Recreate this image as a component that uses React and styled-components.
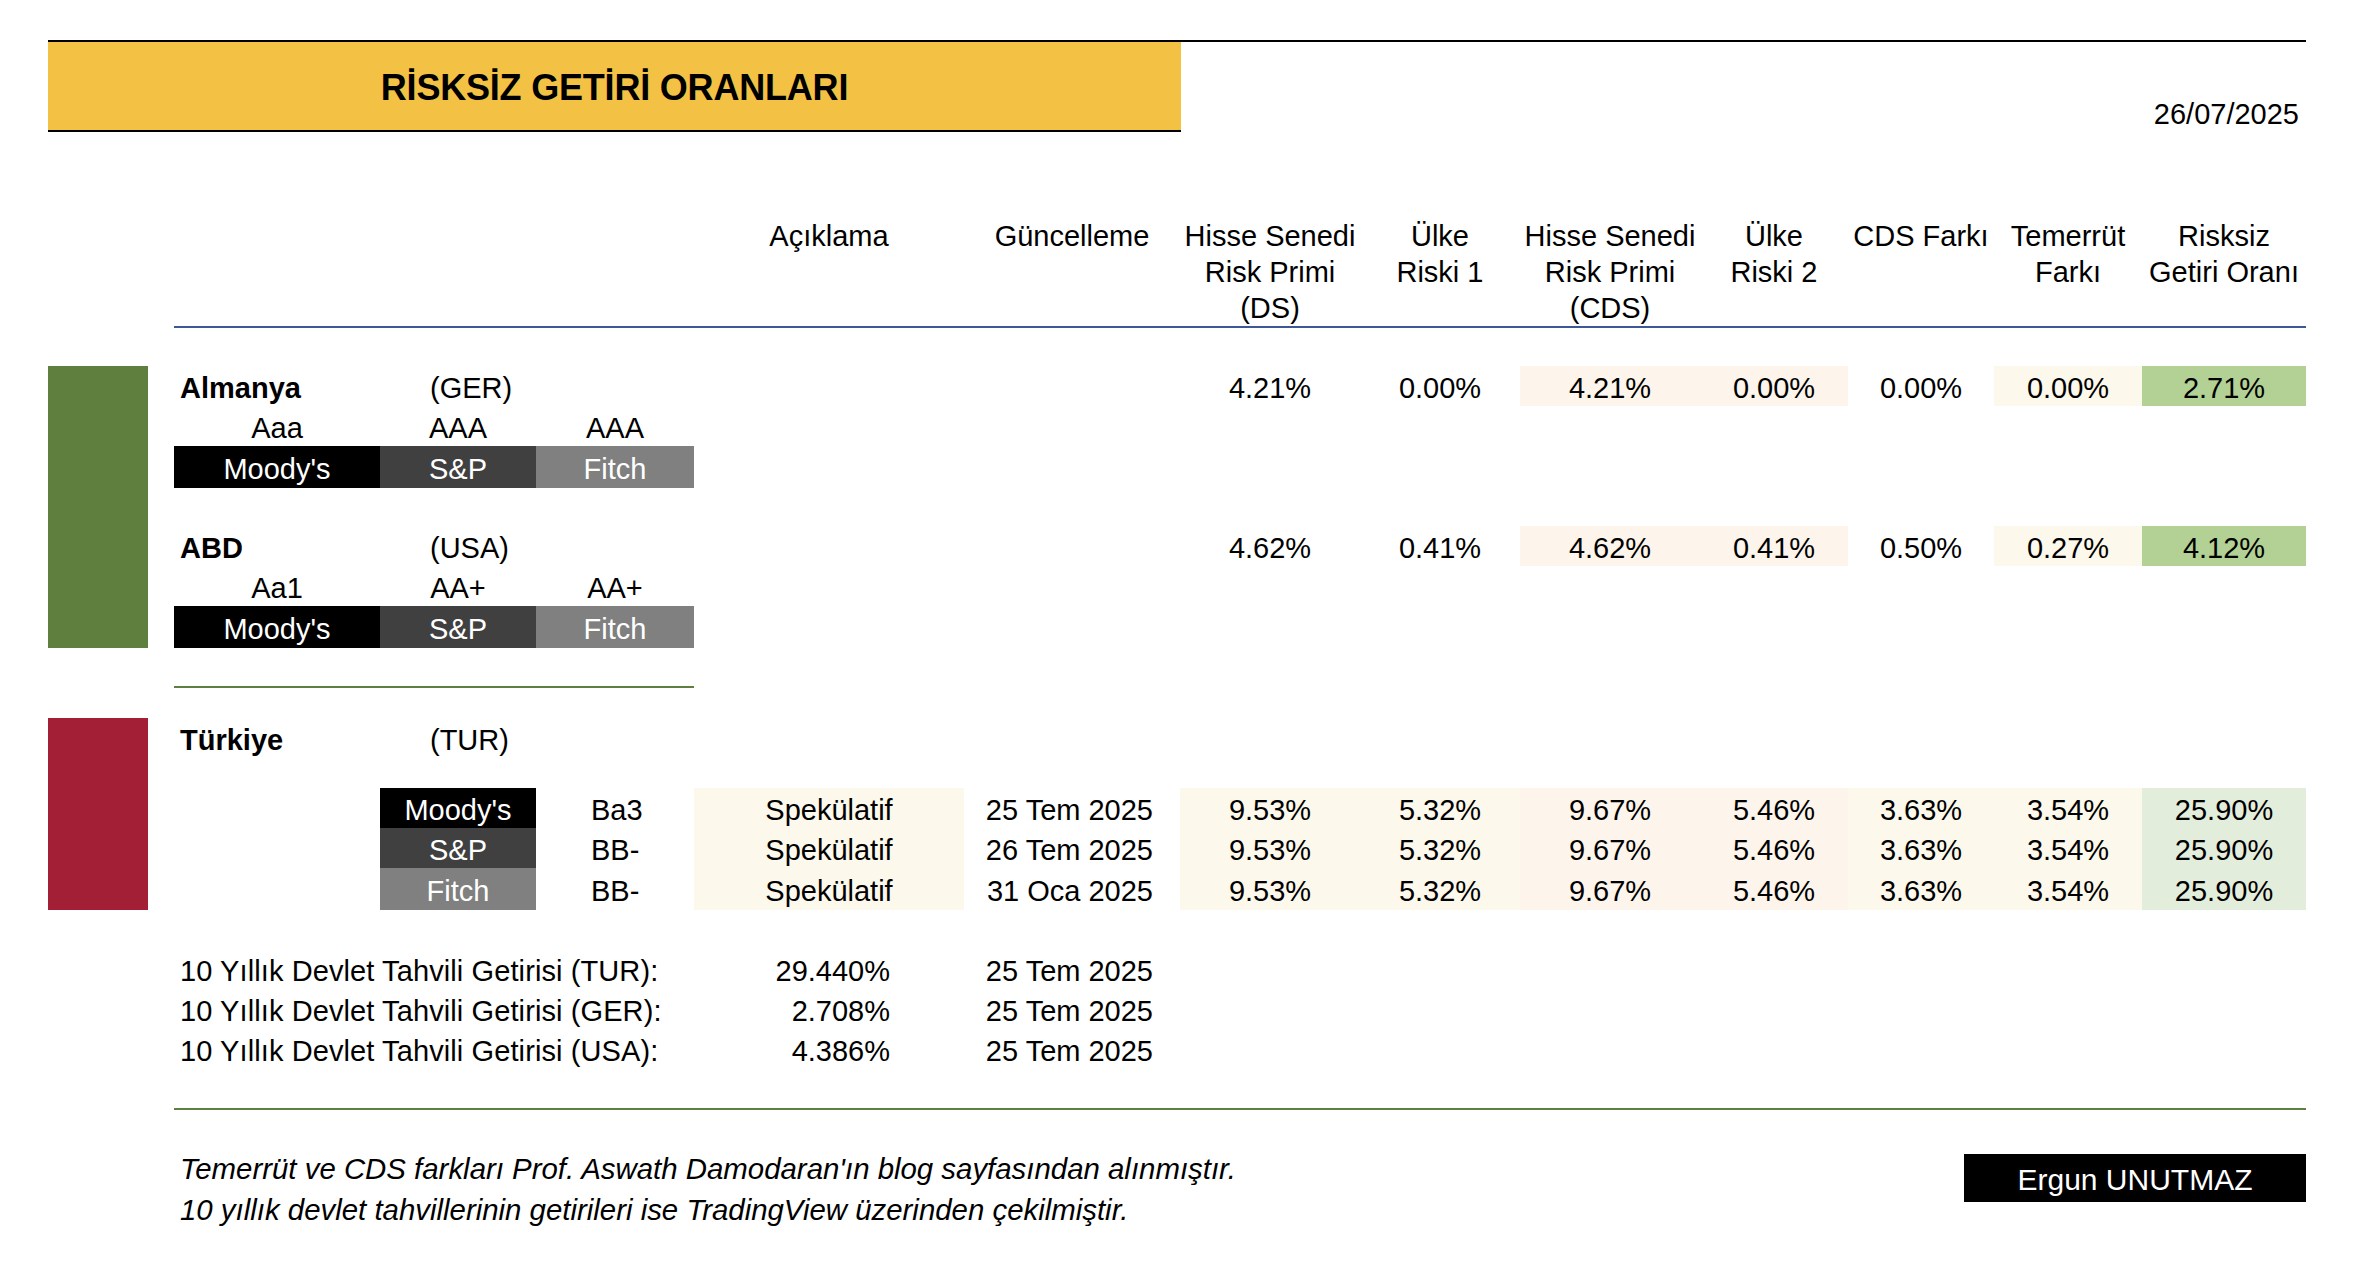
import React from "react";
import styled, { createGlobalStyle } from "styled-components";

const GlobalStyle = createGlobalStyle`
  html, body { margin: 0; padding: 0; background: #ffffff; }
  body {
    font-family: "Liberation Sans", Arial, Helvetica, sans-serif;
    color: #000000;
  }
`;

const COLS =
  "100px 26px 206px 156px 158px 270px 216px 180px 160px 180px 148px 146px 148px 164px";
const ROWS =
  "110px 2px 38px 40px 40px 42px 38px 40px 40px 42px 38px 2px 30px 40px 30px 40px 40px 42px 39px 40px 40px 40px 39px 2px";

const Page = styled.div`
  width: 2370px;
  height: 1264px;
  box-sizing: border-box;
  padding: 40px 64px 0 48px;
  overflow: hidden;
`;

const TitleRow = styled.div`
  display: flex;
  justify-content: space-between;
  border-top: 2px solid #000;
  height: 92px;
`;

const TitleBox = styled.div`
  width: 1133px;
  height: 90px;
  box-sizing: border-box;
  padding-top: 3px;
  background: #f3c244;
  border-bottom: 2px solid #000;
  display: flex;
  align-items: center;
  justify-content: center;
  font-size: 36px;
  font-weight: 700;
  letter-spacing: -0.2px;
`;

const DateText = styled.div`
  align-self: flex-end;
  font-size: 29px;
  line-height: 36px;
  padding-right: 7px;
  margin-bottom: 2px;
`;

const Sheet = styled.div`
  display: grid;
  grid-template-columns: ${COLS};
  grid-template-rows: ${ROWS};
  margin-top: 82px;
  font-size: 29px;
`;

const place = (p) => `
  grid-column: ${p.$col} / span ${p.$span || 1};
  grid-row: ${p.$row} / span ${p.$rspan || 1};
`;

const cellBase = `
  display: flex;
  align-items: center;
  box-sizing: border-box;
  padding-top: 4px;
  white-space: nowrap;
`;

const HeaderCell = styled.div`
  ${place}
  text-align: center;
  line-height: 36px;
  padding-top: 2px;
  white-space: nowrap;
`;

const Rule = styled.div`
  ${place}
  background: ${(p) => p.$color};
`;

const SideBar = styled.div`
  ${place}
  background: ${(p) => p.$color};
`;

const CountryName = styled.div`
  ${place}
  ${cellBase}
  padding-left: 6px;
  font-weight: 700;
`;

const CountryCode = styled.div`
  ${place}
  ${cellBase}
  padding-left: 50px;
`;

const RatingCell = styled.div`
  ${place}
  ${cellBase}
  justify-content: ${(p) => (p.$left ? "flex-start" : "center")};
  padding-left: ${(p) => (p.$left ? "55px" : "0")};
`;

const AGENCY = { moodys: "#000000", sp: "#404040", fitch: "#808080" };

const AgencyTag = styled.div`
  ${place}
  ${cellBase}
  justify-content: center;
  background: ${(p) => AGENCY[p.$kind]};
  color: #ffffff;
`;

const TONES = {
  none: "transparent",
  cream: "#fcf8ec",
  peach: "#fdf5ec",
  green: "#b3d095",
  mint: "#e3eddb",
};

const ValueCell = styled.div`
  ${place}
  ${cellBase}
  justify-content: center;
  background: ${(p) => TONES[p.$tone || "none"]};
`;

const DateCell = styled.div`
  ${place}
  ${cellBase}
  justify-content: flex-end;
  padding-right: 27px;
`;

const BondLabel = styled.div`
  ${place}
  ${cellBase}
  padding-left: 6px;
  letter-spacing: 0.1px;
`;

const BondValue = styled.div`
  ${place}
  ${cellBase}
  justify-content: flex-end;
  padding-right: 74px;
`;

const Footer = styled.div`
  display: flex;
  justify-content: space-between;
  align-items: flex-start;
  margin-top: 38px;
  padding-left: 132px;
`;

const Notes = styled.div`
  font-size: 29.4px;
  line-height: 41px;
  font-style: italic;
`;

const Signature = styled.div`
  width: 342px;
  height: 48px;
  margin-top: 6px;
  box-sizing: border-box;
  padding-top: 3px;
  background: #000;
  color: #fff;
  font-size: 30px;
  display: flex;
  align-items: center;
  justify-content: center;
`;

const headers = [
  ["Açıklama"],
  ["Güncelleme"],
  ["Hisse Senedi", "Risk Primi", "(DS)"],
  ["Ülke", "Riski 1"],
  ["Hisse Senedi", "Risk Primi", "(CDS)"],
  ["Ülke", "Riski 2"],
  ["CDS Farkı"],
  ["Temerrüt", "Farkı"],
  ["Risksiz", "Getiri Oranı"],
];

const topCountries = [
  {
    name: "Almanya",
    code: "(GER)",
    row: 4,
    ratings: ["Aaa", "AAA", "AAA"],
    values: ["4.21%", "0.00%", "4.21%", "0.00%", "0.00%", "0.00%", "2.71%"],
  },
  {
    name: "ABD",
    code: "(USA)",
    row: 8,
    ratings: ["Aa1", "AA+", "AA+"],
    values: ["4.62%", "0.41%", "4.62%", "0.41%", "0.50%", "0.27%", "4.12%"],
  },
];

const topTones = ["none", "none", "peach", "peach", "none", "cream", "green"];
const turTones = ["cream", "cream", "peach", "peach", "cream", "cream", "mint"];

const agencies = [
  { kind: "moodys", label: "Moody's" },
  { kind: "sp", label: "S&P" },
  { kind: "fitch", label: "Fitch" },
];

const turRows = [
  { kind: "moodys", label: "Moody's", rating: "Ba3", date: "25 Tem 2025" },
  { kind: "sp", label: "S&P", rating: "BB-", date: "26 Tem 2025" },
  { kind: "fitch", label: "Fitch", rating: "BB-", date: "31 Oca 2025" },
];
const turValues = ["9.53%", "5.32%", "9.67%", "5.46%", "3.63%", "3.54%", "25.90%"];

const bonds = [
  ["10 Yıllık Devlet Tahvili Getirisi (TUR):", "29.440%", "25 Tem 2025"],
  ["10 Yıllık Devlet Tahvili Getirisi (GER):", "2.708%", "25 Tem 2025"],
  ["10 Yıllık Devlet Tahvili Getirisi (USA):", "4.386%", "25 Tem 2025"],
];

export default function App() {
  return (
    <>
      <GlobalStyle />
      <Page>
        <TitleRow>
          <TitleBox>RİSKSİZ GETİRİ ORANLARI</TitleBox>
          <DateText>26/07/2025</DateText>
        </TitleRow>

        <Sheet>
          {headers.map((lines, i) => (
            <HeaderCell key={i} $col={6 + i} $row={1}>
              {lines.map((l, j) => (
                <div key={j}>{l}</div>
              ))}
            </HeaderCell>
          ))}
          <Rule $col={3} $span={12} $row={2} $color="#3e5795" />

          <SideBar $col={1} $row={4} $rspan={7} $color="#5f7f3e" />
          {topCountries.map((c) => (
            <React.Fragment key={c.name}>
              <CountryName $col={3} $row={c.row}>{c.name}</CountryName>
              <CountryCode $col={4} $span={2} $row={c.row}>{c.code}</CountryCode>
              {c.ratings.map((r, i) => (
                <RatingCell key={i} $col={3 + i} $row={c.row + 1}>{r}</RatingCell>
              ))}
              {agencies.map((a, i) => (
                <AgencyTag key={a.kind} $kind={a.kind} $col={3 + i} $row={c.row + 2}>
                  {a.label}
                </AgencyTag>
              ))}
              {c.values.map((v, i) => (
                <ValueCell key={i} $col={8 + i} $row={c.row} $tone={topTones[i]}>
                  {v}
                </ValueCell>
              ))}
            </React.Fragment>
          ))}
          <Rule $col={3} $span={3} $row={12} $color="#5f7f3e" />

          <SideBar $col={1} $row={14} $rspan={5} $color="#a21f36" />
          <CountryName $col={3} $row={14}>Türkiye</CountryName>
          <CountryCode $col={4} $span={2} $row={14}>(TUR)</CountryCode>
          {turRows.map((t, k) => (
            <React.Fragment key={t.kind}>
              <AgencyTag $kind={t.kind} $col={4} $row={16 + k}>{t.label}</AgencyTag>
              <RatingCell $left $col={5} $row={16 + k}>{t.rating}</RatingCell>
              <ValueCell $col={6} $row={16 + k} $tone="cream">Spekülatif</ValueCell>
              <DateCell $col={7} $row={16 + k}>{t.date}</DateCell>
              {turValues.map((v, i) => (
                <ValueCell key={i} $col={8 + i} $row={16 + k} $tone={turTones[i]}>
                  {v}
                </ValueCell>
              ))}
            </React.Fragment>
          ))}

          {bonds.map((b, k) => (
            <React.Fragment key={k}>
              <BondLabel $col={3} $span={3} $row={20 + k}>{b[0]}</BondLabel>
              <BondValue $col={6} $row={20 + k}>{b[1]}</BondValue>
              <DateCell $col={7} $row={20 + k}>{b[2]}</DateCell>
            </React.Fragment>
          ))}
          <Rule $col={3} $span={12} $row={24} $color="#5f7f3e" />
        </Sheet>

        <Footer>
          <Notes>
            <div>Temerrüt ve CDS farkları Prof. Aswath Damodaran'ın blog sayfasından alınmıştır.</div>
            <div>10 yıllık devlet tahvillerinin getirileri ise TradingView üzerinden çekilmiştir.</div>
          </Notes>
          <Signature>Ergun UNUTMAZ</Signature>
        </Footer>
      </Page>
    </>
  );
}
